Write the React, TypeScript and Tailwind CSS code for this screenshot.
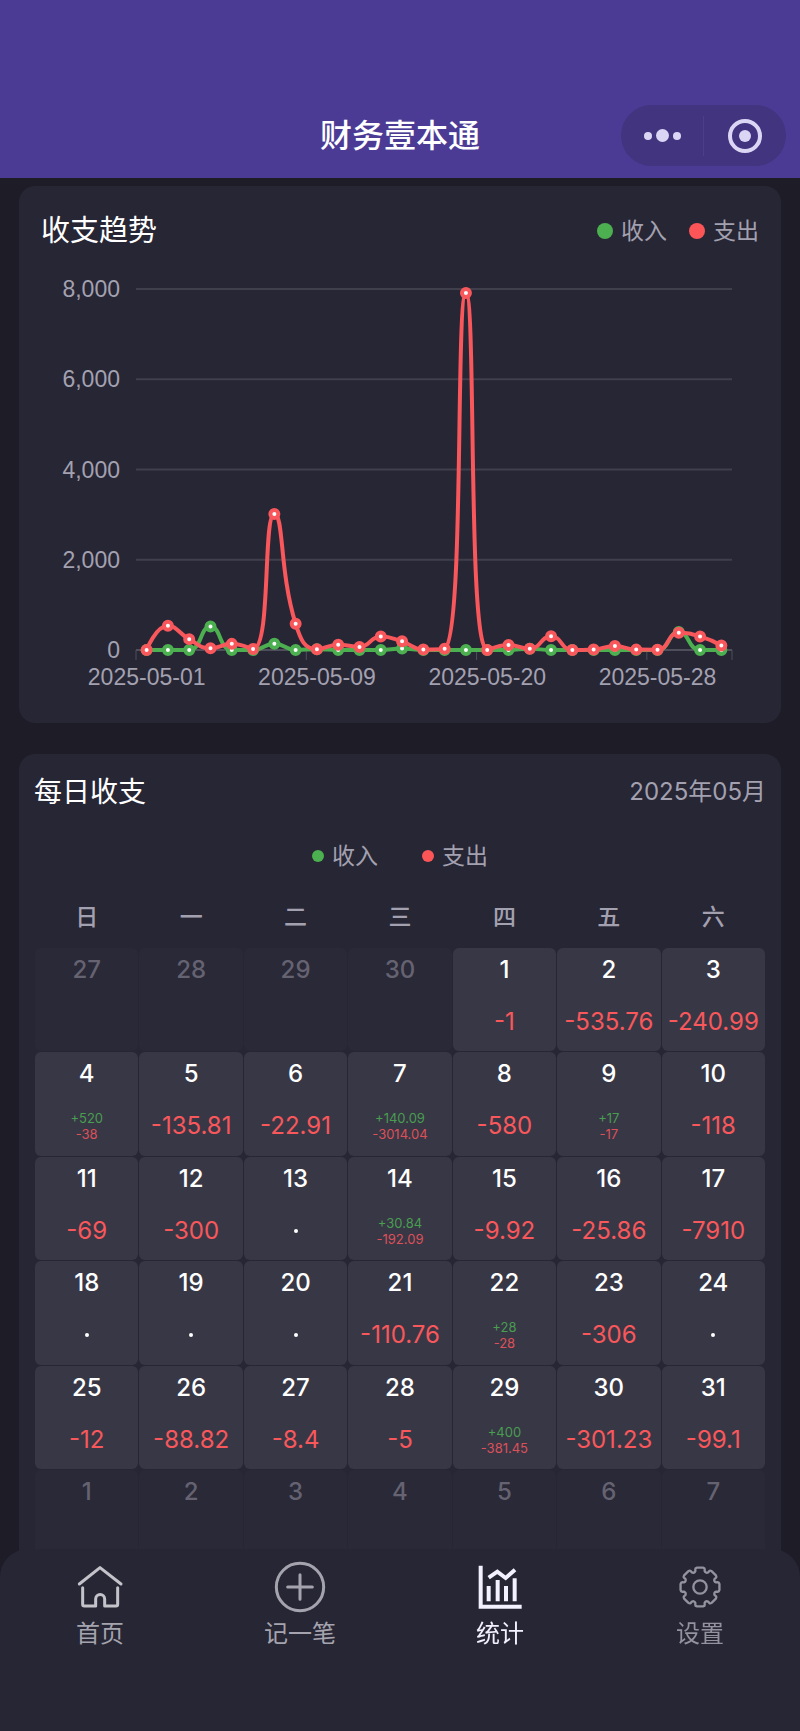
import { Fragment, ReactNode } from "react";
import clsx from "clsx";

interface Day {
  day: number;
  income?: number;
  expense?: number;
  outside?: boolean;
}

interface TrendPoint {
  date: string;
  income: number;
  expense: number;
}

const INCOME = "#4caf50";
const EXPENSE = "#f8575b";

const weekdays = ["日", "一", "二", "三", "四", "五", "六"];

const weeks: Day[][] = [
  [
    { day: 27, outside: true },
    { day: 28, outside: true },
    { day: 29, outside: true },
    { day: 30, outside: true },
    { day: 1, expense: 1 },
    { day: 2, expense: 535.76 },
    { day: 3, expense: 240.99 },
  ],
  [
    { day: 4, income: 520, expense: 38 },
    { day: 5, expense: 135.81 },
    { day: 6, expense: 22.91 },
    { day: 7, income: 140.09, expense: 3014.04 },
    { day: 8, expense: 580 },
    { day: 9, income: 17, expense: 17 },
    { day: 10, expense: 118 },
  ],
  [
    { day: 11, expense: 69 },
    { day: 12, expense: 300 },
    { day: 13 },
    { day: 14, income: 30.84, expense: 192.09 },
    { day: 15, expense: 9.92 },
    { day: 16, expense: 25.86 },
    { day: 17, expense: 7910 },
  ],
  [
    { day: 18 },
    { day: 19 },
    { day: 20 },
    { day: 21, expense: 110.76 },
    { day: 22, income: 28, expense: 28 },
    { day: 23, expense: 306 },
    { day: 24 },
  ],
  [
    { day: 25, expense: 12 },
    { day: 26, expense: 88.82 },
    { day: 27, expense: 8.4 },
    { day: 28, expense: 5 },
    { day: 29, income: 400, expense: 381.45 },
    { day: 30, expense: 301.23 },
    { day: 31, expense: 99.1 },
  ],
  [1, 2, 3, 4, 5, 6, 7].map((day) => ({ day, outside: true })),
];

const trend: TrendPoint[] = weeks
  .flat()
  .filter((d) => !d.outside && ![13, 18, 19].includes(d.day))
  .map((d) => ({
    date: `2025-05-${String(d.day).padStart(2, "0")}`,
    income: d.income ?? 0,
    expense: d.expense ?? 0,
  }));

// chart geometry, in viewBox units
const LEFT = 117;
const RIGHT = 713;
const BASE = 394;
const TOP = 33;
const MAX = 8000;
const STEP = (RIGHT - LEFT) / trend.length;

const toX = (i: number) => LEFT + STEP * (i + 0.5);
const toY = (value: number) => BASE - (value / MAX) * (BASE - TOP);

function clamp(value: number, a: number, b: number) {
  return Math.max(Math.min(a, b), Math.min(Math.max(a, b), value));
}

// bezier smoothing that never overshoots the neighbouring points
function smoothPath(values: number[]) {
  const pts = values.map((v, i) => [toX(i), toY(v)]);
  let path = `M${pts[0][0]} ${pts[0][1]}`;
  let [cx, cy] = pts[0];

  for (let i = 1; i < pts.length; i++) {
    const [x, y] = pts[i];
    const prev = pts[i - 1];
    const next = pts[i + 1];
    if (!next) {
      path += `C${cx} ${cy} ${x} ${y} ${x} ${y}`;
      break;
    }
    const lenPrev = Math.hypot(x - prev[0], y - prev[1]);
    const lenNext = Math.hypot(next[0] - x, next[1] - y);
    const ratio = lenNext / (lenNext + lenPrev);
    const vx = (next[0] - prev[0]) * 0.5;
    const vy = (next[1] - prev[1]) * 0.5;

    let nx = clamp(x + vx * ratio, x, next[0]);
    let ny = clamp(y + vy * ratio, y, next[1]);
    const px = clamp(x - ((nx - x) * lenPrev) / lenNext, x, prev[0]);
    const py = clamp(y - ((ny - y) * lenPrev) / lenNext, y, prev[1]);
    nx = x + ((x - px) * lenNext) / lenPrev;
    ny = y + ((y - py) * lenNext) / lenPrev;

    path += `C${cx} ${cy} ${px} ${py} ${x} ${y}`;
    cx = nx;
    cy = ny;
  }
  return path;
}

function Series({ values, color }: { values: number[]; color: string }) {
  return (
    <g stroke={color} strokeWidth="4">
      <path d={smoothPath(values)} fill="none" strokeLinejoin="bevel" />
      {values.map((v, i) => (
        <circle key={i} cx={toX(i)} cy={toY(v)} r="4" fill="#fff" />
      ))}
    </g>
  );
}

function TrendChart() {
  return (
    <svg
      viewBox="0 0 762 467"
      className="block w-full font-['Liberation_Sans',Arial,sans-serif] text-[23px]"
      role="img"
      aria-label="收支趋势"
    >
      {[0, 2000, 4000, 6000, 8000].map((v) => (
        <Fragment key={v}>
          <line
            x1={LEFT}
            x2={RIGHT}
            y1={toY(v)}
            y2={toY(v)}
            stroke={v === 0 ? "#4f4e5b" : "#403f4c"}
            strokeWidth="2"
          />
          <text x="101" y={toY(v) + 8} textAnchor="end" fill="#a3a1b0">
            {v.toLocaleString("en-US")}
          </text>
        </Fragment>
      ))}
      {[0, 8, 16, 24, trend.length].map((i) => (
        <line
          key={i}
          x1={LEFT + STEP * i}
          x2={LEFT + STEP * i}
          y1={BASE}
          y2={BASE + 10}
          stroke="#4f4e5b"
          strokeWidth="1"
        />
      ))}
      {[0, 8, 16, 24].map((i) => (
        <text key={i} x={toX(i)} y="429" textAnchor="middle" fill="#a3a1b0">
          {trend[i].date}
        </text>
      ))}
      <Series values={trend.map((p) => p.income)} color={INCOME} />
      <Series values={trend.map((p) => p.expense)} color={EXPENSE} />
    </svg>
  );
}

function Amounts({ income, expense, outside }: Day) {
  if (outside) return null;
  if (income && expense) {
    return (
      <div className="text-[13px] leading-4">
        <p className="text-[#489d50]">+{income}</p>
        <p className="text-[#dc5159]">-{expense}</p>
      </div>
    );
  }
  if (expense) return <p className="text-[#f8575b]">-{expense}</p>;
  return <span className="h-1 w-1 rounded-full bg-white" />;
}

function Calendar() {
  return (
    <table className="w-full table-fixed border-separate border-spacing-px text-center">
      <thead>
        <tr>
          {weekdays.map((name) => (
            <th
              key={name}
              className="pb-3 text-[23px] leading-9 font-medium text-[#a3a1b0]"
            >
              {name}
            </th>
          ))}
        </tr>
      </thead>
      <tbody>
        {weeks.map((week, idx) => (
          <tr key={idx}>
            {week.map((d) => (
              <td key={d.day} className="p-0">
                <div
                  className={clsx(
                    "flex aspect-square flex-col rounded-md text-2xl",
                    d.outside
                      ? "bg-[#2a2938] text-[#656371]"
                      : "bg-[#383746] text-white"
                  )}
                >
                  <p className="leading-[44px] font-medium">{d.day}</p>
                  <div className="flex flex-1 items-center justify-center">
                    <Amounts {...d} />
                  </div>
                </div>
              </td>
            ))}
          </tr>
        ))}
      </tbody>
    </table>
  );
}

function gearPath() {
  const at = (deg: number, r: number) => {
    const a = ((deg - 90) * Math.PI) / 180;
    return `${(78 + r * Math.cos(a)).toFixed(1)} ${(78 + r * Math.sin(a)).toFixed(1)}`;
  };
  let path = "";
  for (let t = 0; t < 360; t += 45) {
    path += `${t ? "L" : "M"}${at(t - 16, 50)}`;
    path += `L${at(t - 15, 55)}Q${at(t - 14, 59)} ${at(t - 9, 59)}`;
    path += `L${at(t + 9, 59)}Q${at(t + 14, 59)} ${at(t + 15, 55)}`;
    path += `L${at(t + 16, 50)}Q${at(t + 22, 44)} ${at(t + 29, 50)}`;
  }
  return path + "Z";
}

function Icon({ children }: { children: ReactNode }) {
  return (
    <svg
      viewBox="0 0 156 156"
      className="h-[52px] w-[52px]"
      fill="none"
      stroke="currentColor"
      strokeWidth="9"
      strokeLinecap="round"
      strokeLinejoin="round"
      aria-hidden="true"
    >
      {children}
    </svg>
  );
}

const tabs = [
  {
    label: "首页",
    color: "text-[#a5a4ae]",
    icon: (
      <Icon>
        <g stroke="#c4c3ca">
          <path d="M16 69 78 20l63 49" />
          <path d="M26 80v50q0 5 5 5h34v-21a13 13 0 0 1 27 0v21h34q5 0 5-5V80" />
        </g>
      </Icon>
    ),
  },
  {
    label: "记一笔",
    color: "text-[#a5a4ae]",
    icon: (
      <Icon>
        <circle cx="78" cy="78" r="71" />
        <path d="M41 78h74M78 41v74" />
      </Icon>
    ),
  },
  {
    label: "统计",
    color: "text-[#f3f1ff]",
    active: true,
    icon: (
      <Icon>
        <g strokeWidth="12" strokeLinecap="butt" strokeLinejoin="miter">
          <path d="M20 14v123h123" />
          <path d="M44 75v46M71 57v64M96 75v46M122 52v69" />
          <path d="m44 50 26-18 25 19 28-25" />
        </g>
      </Icon>
    ),
  },
  {
    label: "设置",
    color: "text-[#93929e]",
    icon: (
      <Icon>
        <g strokeWidth="7">
          <path d={gearPath()} />
          <circle cx="78" cy="78" r="20" />
        </g>
      </Icon>
    ),
  },
];

export default function App() {
  return (
    <div className="min-h-screen bg-[#1d1c27] pb-32 font-[Inter,'Noto_Sans_CJK_SC',sans-serif] text-white">
      <header className="grid grid-cols-[1fr_auto_1fr] items-center bg-[#4b3b95] px-[14px] pt-[105px] pb-3">
        <h1 className="col-start-2 text-[32px] leading-10 font-medium">
          财务壹本通
        </h1>
        <div className="flex h-[61px] w-[165px] items-center justify-self-end rounded-full bg-[#42347e] text-[#dcd6f5]">
          <button
            type="button"
            aria-label="更多"
            className="flex h-10 flex-1 items-center justify-center gap-1 border-r border-[#4c3f88]"
          >
            <span className="h-2 w-2 rounded-full bg-current" />
            <span className="h-[13px] w-[13px] rounded-full bg-current" />
            <span className="h-2 w-2 rounded-full bg-current" />
          </button>
          <button
            type="button"
            aria-label="关闭"
            className="flex flex-1 items-center justify-center"
          >
            <span className="flex h-[34px] w-[34px] items-center justify-center rounded-full border-4 border-current">
              <span className="h-3 w-3 rounded-full bg-current" />
            </span>
          </button>
        </div>
      </header>

      <main className="flex flex-col gap-[31px] px-[19px] pt-2">
        <section className="rounded-2xl bg-[#272635] pt-5">
          <div className="flex h-[50px] items-center justify-between px-[22px]">
            <h2 className="text-[29px]">收支趋势</h2>
            <ul className="flex gap-[22px] text-[23px] text-[#a3a1b0]">
              <li className="flex items-center gap-2">
                <span className="h-4 w-4 rounded-full bg-[#4caf50]" />
                收入
              </li>
              <li className="flex items-center gap-2">
                <span className="h-4 w-4 rounded-full bg-[#fc5558]" />
                支出
              </li>
            </ul>
          </div>
          <TrendChart />
        </section>

        <section className="rounded-2xl bg-[#272635] px-[15px] pt-4 pb-4">
          <div className="flex h-11 items-center justify-between">
            <h2 className="text-[28px]">每日收支</h2>
            <time dateTime="2025-05" className="text-2xl text-[#a3a1b0]">
              2025年05月
            </time>
          </div>
          <ul className="flex h-[84px] items-center justify-center gap-11 text-[23px] text-[#a3a1b0]">
            <li className="flex items-center gap-2">
              <span className="h-3 w-3 rounded-full bg-[#4caf50]" />
              收入
            </li>
            <li className="flex items-center gap-2">
              <span className="h-3 w-3 rounded-full bg-[#fc5558]" />
              支出
            </li>
          </ul>
          <Calendar />
        </section>
      </main>

      <nav className="fixed inset-x-0 bottom-0 grid grid-cols-4 rounded-t-[28px] bg-[#272635] pt-3 pb-20">
        {tabs.map((tab) => (
          <a
            key={tab.label}
            href="#"
            aria-current={tab.active ? "page" : undefined}
            className={clsx("flex flex-col items-center gap-1", tab.color)}
          >
            {tab.icon}
            <span className="text-2xl leading-[34px]">{tab.label}</span>
          </a>
        ))}
      </nav>
    </div>
  );
}
